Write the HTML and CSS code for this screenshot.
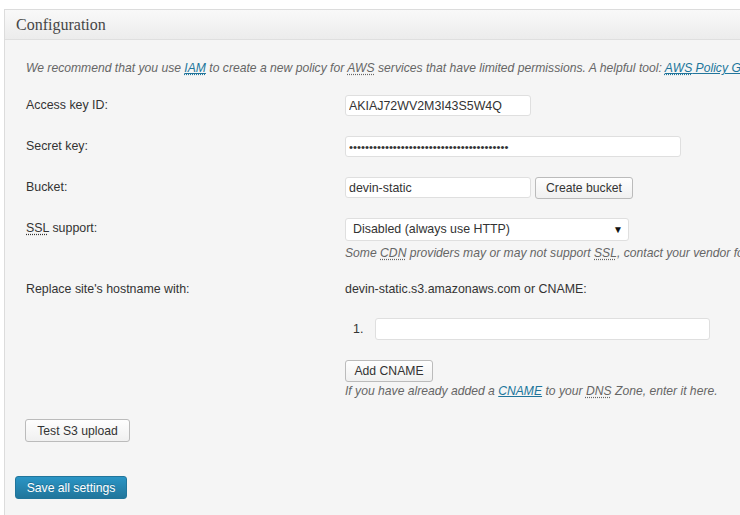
FILE: index.html
```html
<!DOCTYPE html>
<html>
<head>
<meta charset="utf-8">
<title>Configuration</title>
<link rel="stylesheet" href="styles.css">
</head>
<body>
<div class="page">
  <div class="postbox">
    <h3 class="hndle">Configuration</h3>
    <div class="inside">
      <p class="intro">We recommend that you use <a href="#"><abbr>IAM</abbr></a> to create a new policy for <abbr>AWS</abbr> services that have limited permissions. A helpful tool: <a href="#"><abbr>AWS</abbr> Policy Generator</a></p>
      <div class="form">
        <div class="row">
          <div class="label">Access key ID:</div>
          <div class="field"><input class="txt short" type="text" value="AKIAJ72WV2M3I43S5W4Q"></div>
        </div>
        <div class="row">
          <div class="label">Secret key:</div>
          <div class="field"><input class="txt long pw" type="password" value="0123456789012345678901234567890123456789"></div>
        </div>
        <div class="row r3">
          <div class="label">Bucket:</div>
          <div class="field inline"><input class="txt short" type="text" value="devin-static"><button class="btn b-create">Create bucket</button></div>
        </div>
        <div class="row">
          <div class="label"><abbr>SSL</abbr> support:</div>
          <div class="field">
            <div class="select">Disabled (always use HTTP)</div>
            <p class="desc">Some <abbr>CDN</abbr> providers may or may not support <abbr>SSL</abbr>, contact your vendor for more information.</p>
          </div>
        </div>
        <div class="row r5">
          <div class="label text">Replace site's hostname with:</div>
          <div class="field">
            <div class="text">devin-static.s3.amazonaws.com or CNAME:</div>
            <div class="cname-item"><span class="num">1.</span><input class="txt cname" type="text" value=""></div>
            <button class="btn b-add">Add CNAME</button>
            <p class="desc tight">If you have already added a <a href="#">CNAME</a> to your <abbr>DNS</abbr> Zone, enter it here.</p>
          </div>
        </div>
        <div class="row r6">
          <button class="btn b-test">Test S3 upload</button>
        </div>
      </div>
      <button class="btn-primary">Save all settings</button>
    </div>
  </div>
</div>
</body>
</html>
```

FILE: styles.css
```css
html, body {
  margin: 0;
  padding: 0;
  background: #fff;
  overflow: hidden;
}
body {
  font-family: "Liberation Sans", Arial, sans-serif;
  font-size: 12.4px;
  color: #333;
}
.page {
  padding: 9px 0 0 4px;
  width: 740px;
  height: 515px;
  box-sizing: border-box;
  overflow: hidden;
}
.postbox {
  width: 820px;
  height: 520px;
  border: 1px solid #dcdcdc;
  background: #f5f5f5;
  box-sizing: border-box;
}
.hndle {
  margin: 0;
  height: 29px;
  line-height: 29px;
  padding-left: 11px;
  font-family: "Liberation Serif", "Times New Roman", serif;
  font-weight: normal;
  font-size: 16px;
  color: #464646;
  background: linear-gradient(#f9f9f9, #ececec);
  border-bottom: 1px solid #dfdfdf;
}
.inside {
  padding: 0 10px;
}
.intro {
  margin: 19px 0 0 11px;
  line-height: 18px;
  white-space: nowrap;
  font-style: italic;
  font-size: 12.15px;
  color: #666;
}
a {
  color: #21759b;
  text-decoration: underline;
}
abbr {
  text-decoration: underline dotted;
  text-underline-offset: 2px;
}
.form {
  margin-top: 8px;
  padding-left: 10px;
}
.row {
  display: grid;
  grid-template-columns: 320px 1fr;
  padding: 10px 0;
  align-items: start;
}
.row.r3 {
  padding-bottom: 9px;
}
.row.r5 {
  padding-top: 8px;
}
.row.r6 {
  padding-top: 9px;
}
.label {
  line-height: 21px;
  padding-left: 1px;
}
.label.text, .text {
  line-height: 18px;
}
.field.inline {
  display: flex;
  gap: 4px;
}
.txt {
  box-sizing: border-box;
  height: 21px;
  border: 1px solid #dfdfdf;
  border-radius: 3px;
  background: #fff;
  padding: 0 3px;
  font-family: "Liberation Sans", Arial, sans-serif;
  font-size: 12.4px;
  color: #333;
  margin: 0;
  outline: none;
}
.short { width: 186px; }
.long { width: 336px; }
.pw {
  font-size: 11.4px;
  letter-spacing: 0;
}
.cname {
  width: 335px;
  height: 22px;
}
.btn {
  box-sizing: border-box;
  height: 22px;
  padding: 0;
  border: 1px solid #bbb;
  border-radius: 3px;
  background: linear-gradient(#fefefe, #f0f0f0);
  font-family: "Liberation Sans", Arial, sans-serif;
  font-size: 12.2px;
  color: #333;
  margin: 0;
  white-space: nowrap;
  cursor: pointer;
}
.b-create { width: 98px; }
.b-add { width: 88px; margin-top: 20px; display: block; }
.b-test { width: 105px; height: 23px; }
.select {
  position: relative;
  box-sizing: border-box;
  width: 284px;
  height: 23px;
  line-height: 21px;
  border: 1px solid #dfdfdf;
  border-radius: 3px;
  background: #fff;
  padding-left: 7px;
  color: #333;
}
.select::after {
  content: "\25BC";
  position: absolute;
  right: 5px;
  top: 0;
  font-size: 10px;
  color: #111;
}
.desc {
  margin: 3px 0 0;
  line-height: 18px;
  font-style: italic;
  font-size: 12.15px;
  color: #666;
  white-space: nowrap;
}
.desc.tight {
  margin-top: 0;
}
.cname-item {
  display: flex;
  align-items: center;
  margin-top: 20px;
  height: 22px;
}
.num {
  width: 22px;
  margin-left: 8px;
}
.btn-primary {
  display: block;
  box-sizing: border-box;
  margin-top: 24px;
  width: 112px;
  height: 23px;
  border: 1px solid #21759b;
  border-radius: 3px;
  background: linear-gradient(#2a95c5, #21759b);
  color: #fff;
  font-family: "Liberation Sans", Arial, sans-serif;
  font-size: 12.2px;
  text-shadow: 0 -1px 0 rgba(0,0,0,0.2);
  padding: 0;
  cursor: pointer;
}
```
